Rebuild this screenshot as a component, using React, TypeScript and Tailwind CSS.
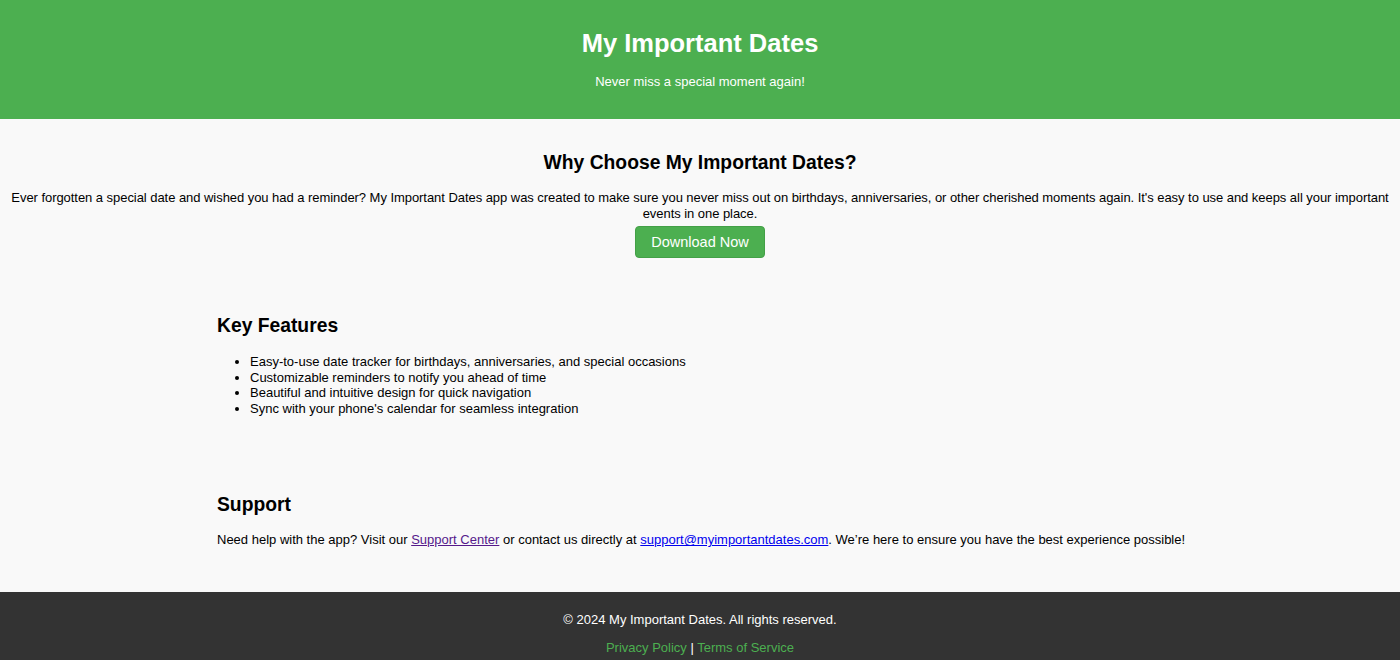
export default function App() {
  const features = [
    "Easy-to-use date tracker for birthdays, anniversaries, and special occasions",
    "Customizable reminders to notify you ahead of time",
    "Beautiful and intuitive design for quick navigation",
    "Sync with your phone's calendar for seamless integration",
  ];
  return (
    <div className="min-h-[660px] bg-[#f9f9f9] text-black text-[13px] leading-[16px] font-['Liberation_Sans',Arial,sans-serif] flex flex-col">
      <header className="bg-[#4caf50] text-white text-center h-[119px] flex flex-col items-center pt-[28px]">
        <h1 className="text-[25.5px] leading-[30px] font-bold">My Important Dates</h1>
        <p className="mt-[16px] text-[13px] leading-[16px]">Never miss a special moment again!</p>
      </header>

      <section className="text-center pt-[32px]">
        <h2 className="text-[19.3px] leading-[23px] font-bold">Why Choose My Important Dates?</h2>
        <p className="mt-[16px] px-[2px] tracking-[-0.05px]">
          Ever forgotten a special date and wished you had a reminder? My Important Dates app was created to make sure you never miss out on birthdays, anniversaries, or other cherished moments again. It's easy to use and keeps all your important events in one place.
        </p>
        <button className="mt-[4px] bg-[#4caf50] text-white text-[14.5px] leading-[18px] px-[15px] h-[32px] rounded-[4px] border border-[#43a047]">
          Download Now
        </button>
      </section>

      <section className="w-[966px] mx-auto pt-[56px]">
        <h2 className="text-[19.3px] leading-[23px] font-bold">Key Features</h2>
        <ul className="mt-[17px] pl-[33px] list-disc">
          {features.map((f) => (
            <li key={f} className="leading-[15.6px]">{f}</li>
          ))}
        </ul>
      </section>

      <section className="w-[966px] mx-auto pt-[77px]">
        <h2 className="text-[19.3px] leading-[23px] font-bold">Support</h2>
        <p className="mt-[16px] whitespace-nowrap">
          Need help with the app? Visit our{" "}
          <a href="#" className="text-[#551a8b] underline">Support Center</a>{" "}
          or contact us directly at{" "}
          <a href="#" className="text-[#0000ee] underline">support@myimportantdates.com</a>. We’re here to ensure you have the best experience possible!
        </p>
      </section>

      <footer className="mt-[44px] bg-[#333333] text-white text-center pt-[20px] pb-[6px] flex-1">
        <p>© 2024 My Important Dates. All rights reserved.</p>
        <p className="mt-[12px]">
          <a href="#" className="text-[#4caf50]">Privacy Policy</a> | <a href="#" className="text-[#4caf50]">Terms of Service</a>
        </p>
      </footer>
    </div>
  );
}
